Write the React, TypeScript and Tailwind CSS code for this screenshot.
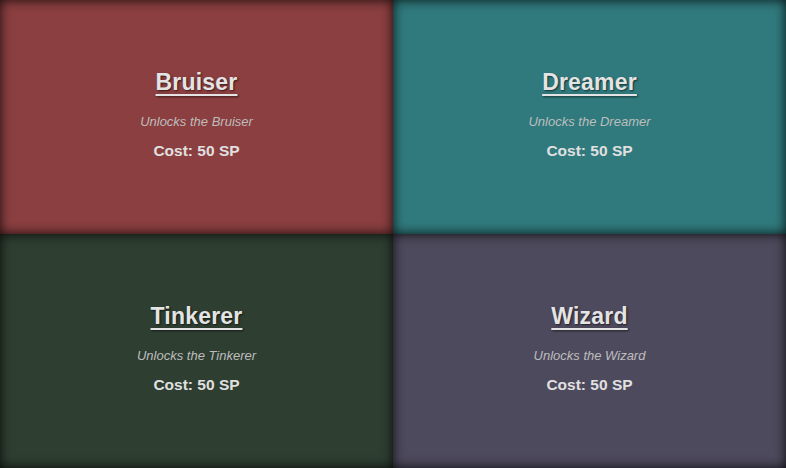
import React from 'react'

interface Unlock {
  name: string
  bg: string
}

const unlocks: Unlock[] = [
  { name: 'Bruiser', bg: 'bg-[#8b3f40]' },
  { name: 'Dreamer', bg: 'bg-[#307a7d]' },
  { name: 'Tinkerer', bg: 'bg-[#2e3e31]' },
  { name: 'Wizard', bg: 'bg-[#4e4a5d]' }
]

const UnlockCard: React.FC<{ item: Unlock }> = ({ item }) => (
  <div
    className={`${item.bg} flex flex-col items-center justify-center pb-[4px] shadow-[inset_0_0_12px_rgba(0,0,0,0.85)]`}
  >
    <h2 className="text-[23px] font-bold leading-none tracking-[0.2px] text-[#e4e4e4] underline underline-offset-[4px] decoration-2 [text-shadow:1px_1px_2px_rgba(0,0,0,0.6)]">
      {item.name}
    </h2>
    <p className="mt-[21px] text-[13px] italic leading-none text-[#bdbdbd]">Unlocks the {item.name}</p>
    <p className="mt-[15px] text-[15.5px] font-bold leading-none text-[#e0e0e0]">Cost: 50 SP</p>
  </div>
)

export default function App() {
  return (
    <div className="grid h-[468px] w-[786px] grid-cols-2 grid-rows-2 font-['Liberation_Sans',Arial,sans-serif]">
      {unlocks.map(u => (
        <UnlockCard key={u.name} item={u} />
      ))}
    </div>
  )
}
